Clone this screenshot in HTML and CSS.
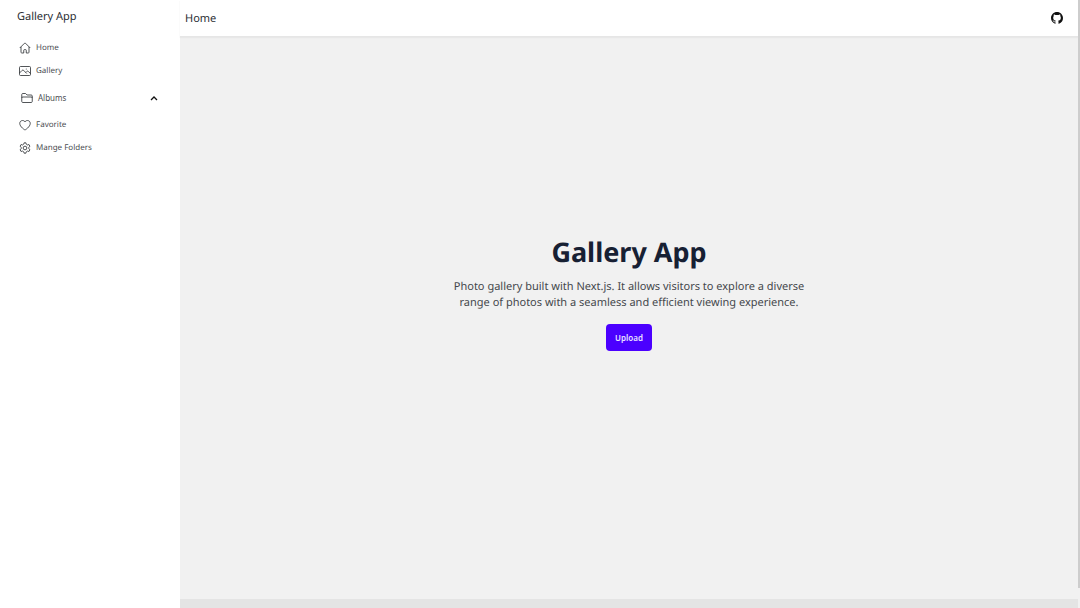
FILE: index.html
```html
<!DOCTYPE html>
<html lang="en">
<head>
<meta charset="utf-8">
<meta name="viewport" content="width=device-width, initial-scale=1">
<title>Gallery App</title>
<link rel="stylesheet" href="styles.css">
</head>
<body>
<div class="app">
  <aside class="sidebar">
    <a class="brand" href="#">Gallery App</a>
    <nav class="menu">
      <a class="item" href="#"><svg class="icon" viewBox="0 0 24 24"><path d="M1.500 12 10.900 2.600c.6-.6 1.600-.6 2.200 0L22.500 12M4 9.700V20.500c0 .8.600 1.500 1.500 1.500H9.500v-5.500c0-.8.600-1.300 1.300-1.300h2.400c.8 0 1.300.5 1.300 1.300V22H18.500c.9 0 1.500-.7 1.500-1.500V9.700"/></svg>Home</a>
      <a class="item" href="#"><svg class="icon" viewBox="0 0 24 24"><rect x="1" y="3" width="22" height="18" rx="2"/><path d="m1 16 5.200-5.200a2.200 2.200 0 0 1 3.200 0L15.500 17m-2-2 2-2a2.200 2.200 0 0 1 3.200 0L23 17"/><circle class="dot" cx="14.500" cy="8" r="1"/></svg>Gallery</a>
      <button class="item albums" type="button" aria-expanded="true"><svg class="icon" viewBox="0 0 24 24"><path d="M1.500 19V5c0-1.100.9-2 2-2h5.700l3 3h8.300c1.100 0 2 .9 2 2v11c0 1.100-.9 2-2 2h-17c-1.100 0-2-.9-2-2ZM1.500 12c0-1.100.9-2 2-2h17c1.100 0 2 .9 2 2"/></svg>Albums<svg class="chevron" viewBox="0 0 8 8"><path d="m1 6 3-3 3 3"/></svg></button>
      <a class="item" href="#"><svg class="icon" viewBox="0 0 24 24"><path d="M22.500 8.500c0-3-2.500-5.500-5.700-5.500-2.200 0-4 1.200-4.800 3-.8-1.800-2.600-3-4.800-3C4 3 1.500 5.500 1.500 8.500 1.500 16 12 22 12 22s10.500-6 10.500-13.500Z"/></svg>Favorite</a>
      <a class="item" href="#"><svg class="icon" viewBox="0 0 24 24"><path d="M9.600 3.900 10 1.700h4l.4 2.200c.1.600.5 1 1 1.300l.9.500c.5.300 1 .3 1.500.1l2.100-.8 2 3.500-1.700 1.400c-.5.400-.7.900-.7 1.400v1.400c0 .5.200 1 .7 1.400l1.700 1.400-2 3.500-2.100-.8c-.5-.2-1-.2-1.500.1l-.9.500c-.5.300-.9.700-1 1.300l-.4 2.200h-4l-.4-2.200c-.1-.6-.5-1-1-1.300l-.9-.5c-.5-.3-1-.3-1.500-.1l-2.100.8-2-3.500 1.700-1.400c.5-.4.700-.9.700-1.400v-1.400c0-.5-.2-1-.7-1.400L2.100 8.500l2-3.500 2.100.8c.5.200 1 .2 1.500-.1l.9-.5c.5-.3.900-.7 1-1.300Z"/><circle cx="12" cy="12" r="3.700"/></svg>Mange Folders</a>
    </nav>
  </aside>
  <div class="page">
    <header class="topbar">
      <span>Home</span>
      <a class="github" href="#" aria-label="GitHub"><svg viewBox="0 0 16 16"><path d="M8 0C3.580 0 0 3.580 0 8c0 3.540 2.290 6.530 5.470 7.590.4.070.55-.17.55-.38 0-.19-.01-.82-.01-1.490-2.010.37-2.530-.49-2.690-.94-.09-.23-.48-.94-.82-1.130-.28-.15-.68-.52-.01-.53.63-.01 1.080.58 1.230.82.72 1.210 1.870.87 2.330.66.07-.52.28-.87.510-1.070-1.780-.2-3.640-.89-3.640-3.950 0-.87.310-1.590.82-2.150-.08-.2-.36-1.020.08-2.120 0 0 .67-.21 2.200.82.64-.18 1.320-.27 2-.27s1.360.09 2 .27c1.530-1.040 2.200-.82 2.200-.82.44 1.100.16 1.920.08 2.120.51.56.82 1.270.82 2.150 0 3.070-1.870 3.750-3.650 3.950.29.25.54.73.54 1.480 0 1.070-.01 1.930-.01 2.200 0 .21.15.46.55.38A8.010 8.010 0 0 0 16 8c0-4.420-3.580-8-8-8Z"/></svg></a>
    </header>
    <main class="hero">
      <h1>Gallery App</h1>
      <p>Photo gallery built with Next.js. It allows visitors to explore a diverse range of photos with a seamless and efficient viewing experience.</p>
      <button class="upload" type="button">Upload</button>
    </main>
    <footer class="footer"></footer>
  </div>
  <div class="scrollbar"><div class="thumb"></div></div>
</div>
</body>
</html>
```
FILE: styles.css
```css
* { box-sizing: border-box; }
body {
  margin: 0;
  font-family: "Noto Sans", sans-serif;
  color: #2b2e33;
  background: #fff;
  text-rendering: geometricPrecision;
}
a { color: inherit; text-decoration: none; }
button { font: inherit; color: inherit; border: 0; background: none; cursor: pointer; }
.app { display: flex; min-height: 100vh; }
.sidebar { flex: 0 0 180px; padding: 9px 17px; }
.brand { display: block; font-size: 11px; line-height: 16px; }
.menu { display: flex; flex-direction: column; padding-top: 11px; }
.item {
  display: flex;
  align-items: center;
  gap: 5px;
  height: 23px;
  padding: 0 2px;
  font-size: 8px;
  line-height: 11px;
  color: #4b4e52;
}
.albums { height: 31px; padding: 0 4px; }
.icon { width: 12px; height: 12px; fill: none; stroke: #33363a; stroke-width: 1.7; stroke-linejoin: round; }
.dot { fill: #33363a; stroke: none; }
.chevron { width: 8px; height: 8px; margin-left: auto; margin-right: 1px; fill: none; stroke: #111; stroke-width: 1.3; }
.page { flex: 1; display: flex; flex-direction: column; background: #f1f1f1; }
.topbar {
  display: flex;
  align-items: center;
  justify-content: space-between;
  height: 37px;
  padding: 0 15px 0 5px;
  font-size: 11px;
  background: #fff;
  border-bottom: 1px solid #e6e6e6;
  box-shadow: 0 1px 1px #e8e8e8;
}
.github svg { display: block; width: 12px; height: 12px; fill: #111; }
.hero {
  flex: 1;
  display: flex;
  flex-direction: column;
  align-items: center;
  justify-content: center;
  padding: 0 16px 48px;
  text-align: center;
}
h1 { margin: 0; font-size: 27px; line-height: 28px; color: #172033; }
p { max-width: 376px; margin: 13px 0; font-size: 11px; line-height: 16px; color: #45484c; }
.upload {
  height: 27px;
  padding: 0 9px;
  border-radius: 4px;
  font-size: 8px;
  font-weight: 600;
  color: #e9e3ff;
  background: #4b00ff;
}
.footer { height: 9px; background: #e4e4e4; }
.scrollbar { width: 2px; padding-bottom: 20px; display: flex; background: #f1f1f1; }
.thumb { flex: 1; background: #cdcdcd; }
```
